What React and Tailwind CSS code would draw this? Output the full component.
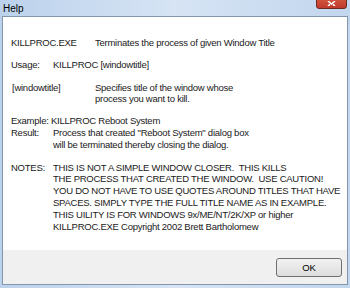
import React from "react";

const NOTES = [
  "THIS IS NOT A SIMPLE WINDOW CLOSER.  THIS KILLS",
  "THE PROCESS THAT CREATED THE WINDOW.  USE CAUTION!",
  "YOU DO NOT HAVE TO USE QUOTES AROUND TITLES THAT HAVE",
  "SPACES. SIMPLY TYPE THE FULL TITLE NAME AS IN EXAMPLE.",
  "THIS UILITY IS FOR WINDOWS 9x/ME/NT/2K/XP or higher",
  "KILLPROC.EXE Copyright 2002 Brett Bartholomew",
];

export default function App() {
  return (
    <div
      className="w-[350px] h-[288px] flex flex-col overflow-hidden bg-gradient-to-r from-[#bcd2ec] via-[#d6e4f4] to-[#c2d6ee] text-[#1a1a1a]"
      style={{ fontFamily: '"Liberation Sans", Arial, sans-serif' }}
    >
      {/* Title bar */}
      <div className="relative h-[16px] shrink-0 flex items-center pl-[3px] text-[10px] text-black">
        Help
        <div className="absolute right-[3px] top-[-10px] w-[31px] h-[19px] rounded-[3px] border border-[#6b2a22] bg-gradient-to-b from-[#e8a493] via-[#d0533d] to-[#c0392b] flex items-end justify-center pb-[2px]">
          <svg width="9" height="5" viewBox="0 0 9 5">
            <path d="M1 0 L4.5 3 L8 0 M1 5 L3 3.3 M8 5 L6 3.3" stroke="#fff" strokeWidth="1.6" fill="none" />
          </svg>
        </div>
      </div>

      {/* Client area */}
      <div className="flex-1 mx-[2px] flex flex-col border border-[#8496ab] bg-white">
        <div className="flex-1 pl-[8px] pt-[20px] text-[9.5px] leading-[11.8px] tracking-[-0.25px]">
          <div className="flex">
            <div className="w-[84px]">KILLPROC.EXE</div>
            <div>Terminates the process of given Window Title</div>
          </div>
          <div className="flex mt-[10px]">
            <div className="w-[42px]">Usage:</div>
            <div>KILLPROC [windowtitle]</div>
          </div>
          <div className="flex mt-[11px]">
            <div className="w-[84px] pl-[1px]">[windowtitle]</div>
            <div>
              <div>Specifies title of the window whose</div>
              <div>process you want to kill.</div>
            </div>
          </div>
          <div className="mt-[10px]">Example: KILLPROC Reboot System</div>
          <div className="flex">
            <div className="w-[42px]">Result:</div>
            <div>
              <div>Process that created "Reboot System" dialog box</div>
              <div>will be terminated thereby closing the dialog.</div>
            </div>
          </div>
          <div className="flex mt-[11px]">
            <div className="w-[42px]">NOTES:</div>
            <div>
              {NOTES.map((line) => (
                <div key={line} className="whitespace-pre">{line}</div>
              ))}
            </div>
          </div>
        </div>
        <div className="h-[34px] shrink-0 bg-[#f0f0f0] flex items-center justify-end pr-[5px] pt-[1px]">
          <button className="w-[66px] h-[19px] rounded-[3px] border border-[#707070] bg-gradient-to-b from-[#f2f2f2] to-[#dddddd] text-[9.5px] text-black leading-none">
            OK
          </button>
        </div>
      </div>
      <div className="h-[3px] shrink-0" />
    </div>
  );
}
